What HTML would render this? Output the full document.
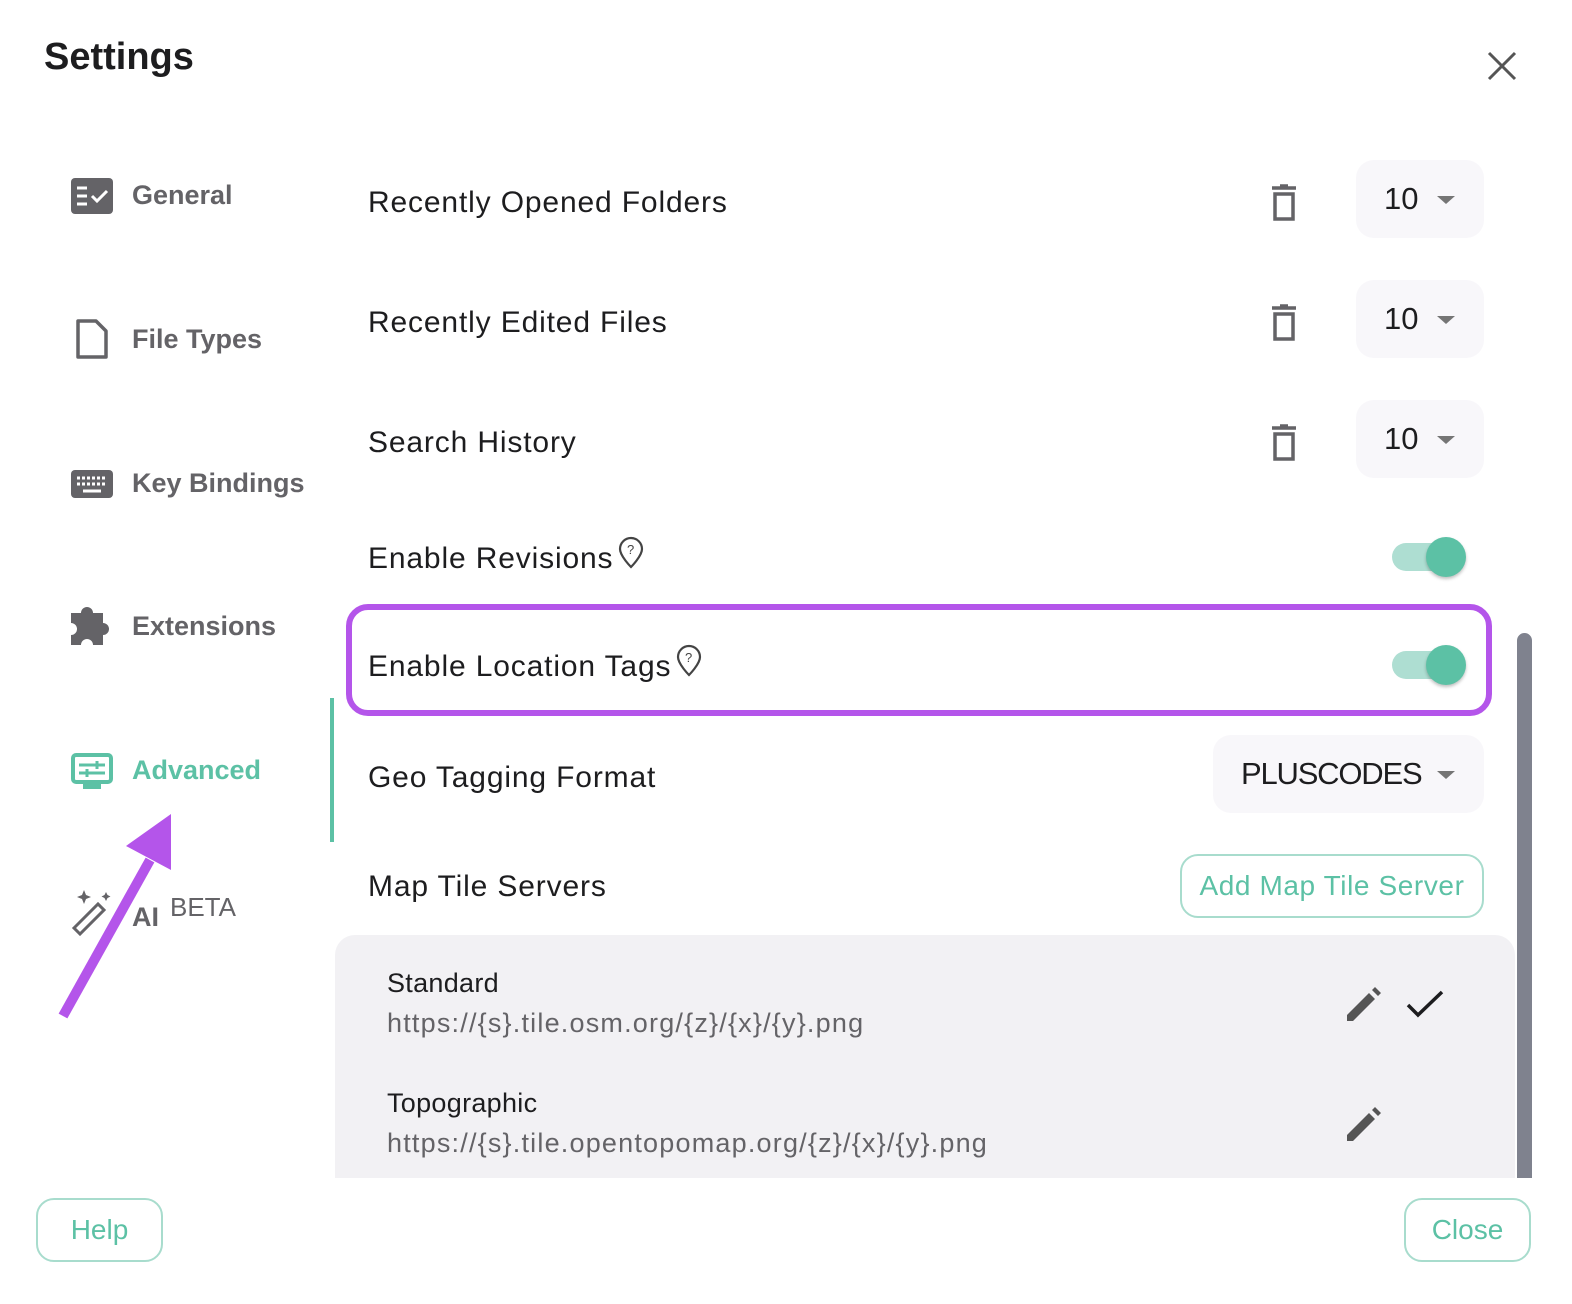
<!DOCTYPE html><html><head><style>
body{margin:0;width:1572px;height:1304px;background:#fff;font-family:"Liberation Sans",sans-serif;position:relative;overflow:hidden}
.a{position:absolute}
.lab{position:absolute;left:368px;font-size:30px;color:#1d1d1f;letter-spacing:0.85px;white-space:nowrap}
.lab svg{vertical-align:-2px;margin-left:4px}
.nav{position:absolute;left:132px;font-size:27px;font-weight:bold;color:#646367}
.sel{position:absolute;background:#f8f7fa;border-radius:18px;font-size:31px;color:#1d1d1f}
.tri{position:absolute;width:0;height:0;border-left:9px solid transparent;border-right:9px solid transparent;border-top:8px solid #757575}
.tog{position:absolute;left:1392px;width:72px;height:28px;border-radius:14px;background:#aeded2}
.tog:after{content:"";position:absolute;right:-2px;top:-6px;width:40px;height:40px;border-radius:50%;background:#5cc1a5;box-shadow:0 2px 3px rgba(0,0,0,.25)}
.btn{position:absolute;border:2px solid #a8dccd;border-radius:18px;color:#5cc1a5;font-size:28px;text-align:center;box-sizing:border-box;white-space:nowrap}
.url{position:absolute;left:387px;font-size:27px;color:#646367;letter-spacing:1.2px}
</style></head><body>
<div class="a" style="left:44px;top:36px;font-size:38px;font-weight:bold;color:#1d1d1f">Settings</div>
<svg class="a" style="left:1486px;top:50px" width="32" height="32"><path d="M3 3L29 29M29 3L3 29" stroke="#555" stroke-width="3"/></svg>

<svg class="a" style="left:71px;top:178px" width="42" height="36"><rect width="42" height="36" rx="4" fill="#646367"/><path d="M6 10h10M6 18h10M6 26h10" stroke="#fff" stroke-width="3"/><path d="M21 18l5 5 10-10" stroke="#fff" stroke-width="3" fill="none"/></svg>
<div class="nav" style="top:180px">General</div>
<svg class="a" style="left:75px;top:318px" width="34" height="42"><path d="M3 3h18l10 10v26H3z" fill="none" stroke="#646367" stroke-width="3.5" stroke-linejoin="round"/></svg>
<div class="nav" style="top:324px">File Types</div>
<svg class="a" style="left:71px;top:470px" width="42" height="28"><rect width="42" height="28" rx="4" fill="#646367"/><path d="M6 8h30M6 14h30" stroke="#fff" stroke-width="3" stroke-dasharray="3 2"/><path d="M12 21h18" stroke="#fff" stroke-width="3"/></svg>
<div class="nav" style="top:468px">Key Bindings</div>
<svg class="a" style="left:71px;top:605px" width="44" height="42"><path d="M0 8h10a6 6 0 0 1 12 0h10v10a6 6 0 0 1 0 12v10H22a6 6 0 0 0-12 0H0V30a6 6 0 0 0 0-12z" fill="#646367"/></svg>
<div class="nav" style="top:611px">Extensions</div>
<svg class="a" style="left:71px;top:753px" width="42" height="36"><rect x="2" y="2" width="38" height="27" rx="3" fill="none" stroke="#5cc1a5" stroke-width="4"/><rect x="12" y="30" width="18" height="6" fill="#5cc1a5"/><path d="M8 12h26M8 20h26" stroke="#5cc1a5" stroke-width="3"/><path d="M26 8v8M16 16v8" stroke="#5cc1a5" stroke-width="3"/></svg>
<div class="nav" style="top:755px;color:#5cc1a5">Advanced</div>
<svg class="a" style="left:70px;top:890px" width="46" height="46"><path d="M4 38L28 14l6 6L10 44z" fill="none" stroke="#646367" stroke-width="3"/><path d="M14 0l2 5 5 2-5 2-2 5-2-5-5-2 5-2zM36 2l1.5 3 3 1.5-3 1.5L36 11l-1.5-3-3-1.5 3-1.5z" fill="#646367"/></svg>
<div class="nav" style="top:902px">AI</div>
<div class="a" style="left:170px;top:892px;font-size:26px;color:#646367">BETA</div>
<div class="a" style="left:330px;top:698px;width:4px;height:144px;background:#5cc1a5"></div>

<div class="lab" style="top:186px">Recently Opened Folders</div>
<div class="lab" style="top:306px">Recently Edited Files</div>
<div class="lab" style="top:426px">Search History</div>
<div class="lab" style="top:534px;line-height:50px">Enable Revisions<svg width="28" height="34"><path d="M14 2a11 11 0 0 1 11 11c0 7-11 18-11 18S3 20 3 13A11 11 0 0 1 14 2z" fill="none" stroke="#444" stroke-width="2.2"/><text x="14" y="18" font-size="13" text-anchor="middle" fill="#444" font-family="Liberation Sans">?</text></svg></div>
<div class="lab" style="top:642px;line-height:50px">Enable Location Tags<svg width="28" height="34"><path d="M14 2a11 11 0 0 1 11 11c0 7-11 18-11 18S3 20 3 13A11 11 0 0 1 14 2z" fill="none" stroke="#444" stroke-width="2.2"/><text x="14" y="18" font-size="13" text-anchor="middle" fill="#444" font-family="Liberation Sans">?</text></svg></div>
<div class="lab" style="top:761px">Geo Tagging Format</div>
<div class="lab" style="top:870px">Map Tile Servers</div>

<svg class="a" style="left:1270px;top:184px" width="28" height="38"><path d="M2 4h24M10 2h8" stroke="#646367" stroke-width="3.5"/><rect x="5" y="10" width="18" height="25" fill="none" stroke="#646367" stroke-width="3.5"/></svg>
<svg class="a" style="left:1270px;top:304px" width="28" height="38"><path d="M2 4h24M10 2h8" stroke="#646367" stroke-width="3.5"/><rect x="5" y="10" width="18" height="25" fill="none" stroke="#646367" stroke-width="3.5"/></svg>
<svg class="a" style="left:1270px;top:424px" width="28" height="38"><path d="M2 4h24M10 2h8" stroke="#646367" stroke-width="3.5"/><rect x="5" y="10" width="18" height="25" fill="none" stroke="#646367" stroke-width="3.5"/></svg>
<div class="sel" style="left:1356px;top:160px;width:128px;height:78px"><span class="a" style="left:28px;top:21px">10</span><div class="tri" style="left:81px;top:36px"></div></div>
<div class="sel" style="left:1356px;top:280px;width:128px;height:78px"><span class="a" style="left:28px;top:21px">10</span><div class="tri" style="left:81px;top:36px"></div></div>
<div class="sel" style="left:1356px;top:400px;width:128px;height:78px"><span class="a" style="left:28px;top:21px">10</span><div class="tri" style="left:81px;top:36px"></div></div>
<div class="sel" style="left:1213px;top:735px;width:271px;height:78px"><span class="a" style="left:28px;top:21px;letter-spacing:-1.2px">PLUSCODES</span><div class="tri" style="left:224px;top:36px"></div></div>
<div class="tog" style="top:543px"></div>
<div class="tog" style="top:651px"></div>
<div class="a" style="left:346px;top:604px;width:1146px;height:112px;border:6px solid #b455ea;border-radius:22px;box-sizing:border-box"></div>
<div class="btn" style="left:1180px;top:854px;width:304px;height:64px;line-height:60px;letter-spacing:0.6px">Add Map Tile Server</div>

<div class="a" style="left:335px;top:935px;width:1180px;height:243px;background:#f2f1f4;border-radius:20px 20px 0 0"></div>
<div class="a" style="left:387px;top:968px;font-size:27px;color:#1d1d1f;letter-spacing:0.3px">Standard</div>
<div class="url" style="top:1008px">https://{s}.tile.osm.org/{z}/{x}/{y}.png</div>
<div class="a" style="left:387px;top:1088px;font-size:27px;color:#1d1d1f;letter-spacing:0.3px">Topographic</div>
<div class="url" style="top:1128px">https://{s}.tile.opentopomap.org/{z}/{x}/{y}.png</div>
<svg class="a" style="left:1345px;top:985px" width="38" height="38"><path d="M2 30v6h6L30 14l-6-6zM27 5l6 6 3-3-6-6z" fill="#555"/></svg>
<svg class="a" style="left:1345px;top:1105px" width="38" height="38"><path d="M2 30v6h6L30 14l-6-6zM27 5l6 6 3-3-6-6z" fill="#555"/></svg>
<svg class="a" style="left:1406px;top:990px" width="38" height="30"><path d="M2 15l10 10L36 2" fill="none" stroke="#1d1d1f" stroke-width="3.5"/></svg>
<div class="a" style="left:1517px;top:633px;width:15px;height:545px;background:#7f828e;border-radius:8px 8px 0 0"></div>

<svg class="a" style="left:55px;top:810px" width="130" height="215"><path d="M8 206L95 50" stroke="#b455ea" stroke-width="10"/><path d="M116 4L116 60L71 36z" fill="#b455ea"/></svg>

<div class="btn" style="left:36px;top:1198px;width:127px;height:64px;line-height:60px">Help</div>
<div class="btn" style="left:1404px;top:1198px;width:127px;height:64px;line-height:60px">Close</div>
</body></html>
